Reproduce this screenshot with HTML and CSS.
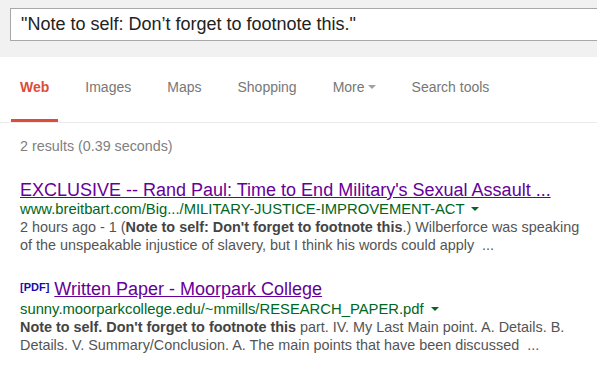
FILE: index.html
```html
<!DOCTYPE html>
<html>
<head>
<meta charset="utf-8">
<link rel="stylesheet" href="styles.css">
</head>
<body>
<header class="top">
  <div class="search">"Note to self: Don’t forget to footnote this."</div>
</header>
<nav class="tabs">
  <span class="tab active">Web</span>
  <span class="tab">Images</span>
  <span class="tab">Maps</span>
  <span class="tab">Shopping</span>
  <span class="tab">More<span class="caret gray"></span></span>
  <span class="tab">Search tools</span>
</nav>
<main class="results">
  <div class="stats">2 results (0.39 seconds)</div>
  <div class="result">
    <a class="title">EXCLUSIVE -- Rand Paul: Time to End Military's Sexual Assault ...</a>
    <div class="url">www.breitbart.com/Big.../MILITARY-JUSTICE-IMPROVEMENT-ACT <span class="caret green"></span></div>
    <div class="snippet">2 hours ago - 1 (<b>Note to self: Don't forget to footnote this</b>.) Wilberforce was speaking of the unspeakable injustice of slavery, but I think his words could apply &nbsp;...</div>
  </div>
  <div class="result">
    <div class="title-row"><span class="pdf">[PDF]</span><a class="title">Written Paper - Moorpark College</a></div>
    <div class="url">sunny.moorparkcollege.edu/~mmills/RESEARCH_PAPER.pdf <span class="caret green"></span></div>
    <div class="snippet"><b>Note to self. Don't forget to footnote this</b> part. IV. My Last Main point. A. Details. B. Details. V. Summary/Conclusion. A. The main points that have been discussed &nbsp;...</div>
  </div>
</main>
</body>
</html>
```
FILE: styles.css
```css
html, body {
  margin: 0;
  padding: 0;
  background: #fff;
  overflow: hidden;
}
body {
  font-family: Arial, "Liberation Sans", sans-serif;
  width: 597px;
  height: 370px;
}
.top {
  background: #f1f1f1;
  height: 57px;
  padding: 8px 0 0 10px;
  box-sizing: border-box;
}
.search {
  height: 33px;
  box-sizing: border-box;
  border: 1px solid #a8a8a8;
  border-right: none;
  background: #fff;
  font-size: 18px;
  color: #222;
  line-height: 31px;
  padding-left: 10px;
  white-space: nowrap;
}
.tabs {
  display: flex;
  gap: 18px;
  height: 66px;
  box-sizing: border-box;
  border-bottom: 1px solid #ebebeb;
  padding-left: 11px;
}
.tab {
  font-size: 14px;
  color: #777;
  padding: 22px 9px 0 9px;
  height: 65px;
  line-height: 17px;
  box-sizing: border-box;
  white-space: nowrap;
}
.tab.active {
  color: #dd4b39;
  font-weight: bold;
  border-bottom: 3px solid #dd4b39;
}
.caret {
  display: inline-block;
  width: 0;
  height: 0;
  border-left: 4px solid transparent;
  border-right: 4px solid transparent;
  border-top: 4px solid #a0a0a0;
  vertical-align: 3px;
}
.caret.gray { margin-left: 3px; }
.caret.green { border-top-color: #006621; margin-left: 3px; }
.results {
  padding: 15px 14px 0 20px;
}
.stats {
  font-size: 14.3px;
  color: #808080;
  line-height: 16px;
}
.result {
  margin-top: 26px;
}
.result + .result {
  margin-top: 23px;
}
.title {
  font-size: 18px;
  line-height: 20px;
  color: #660099;
  text-decoration: underline;
  white-space: nowrap;
}
.title-row {
  line-height: 20px;
}
.pdf {
  font-size: 11px;
  font-weight: bold;
  color: #1a0dab;
  vertical-align: 4px;
  margin-right: 5px;
}
.url {
  font-size: 14.8px;
  color: #006621;
  line-height: 18px;
}
.snippet {
  font-size: 14.4px;
  color: #545454;
  line-height: 18px;
}
.snippet b {
  color: #444;
}
```
